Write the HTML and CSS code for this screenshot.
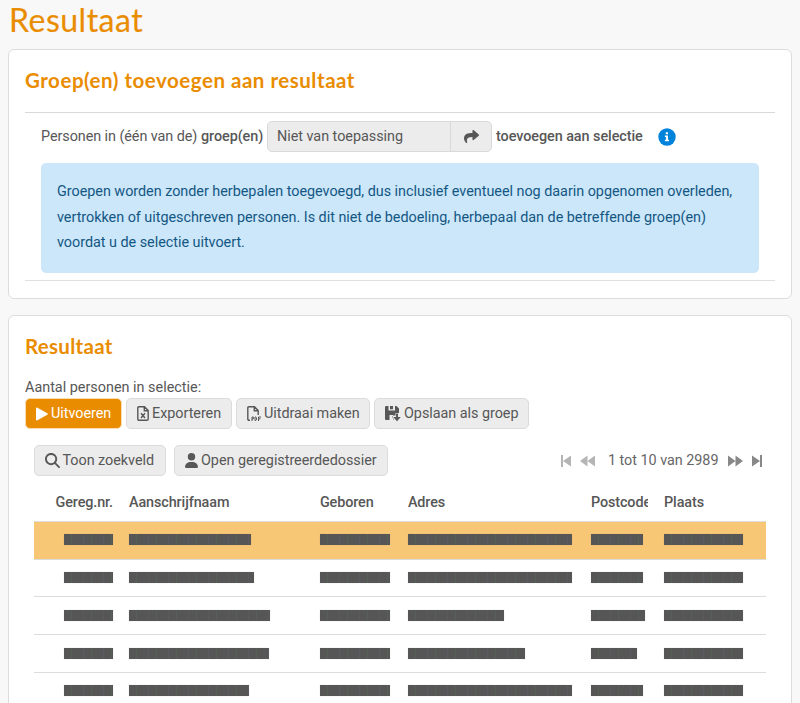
FILE: index.html
```html
<!DOCTYPE html>
<html lang="nl">
<head>
<meta charset="utf-8">
<title>Resultaat</title>
<link rel="stylesheet" href="styles.css">
</head>
<body>
<h1>Resultaat</h1>

<section class="card card-groups">
  <h2 class="h-groups">Groep(en) toevoegen aan resultaat</h2>
  <div class="group-body">
    <div class="group-row">
      <span class="t-intro">Personen in (één van de)</span>
      <b class="t-group">groep(en)</b>
      <div class="picker">
        <span class="picker-value">Niet van toepassing</span>
        <span class="picker-go"><svg width="15" height="15" viewBox="0 0 512 512"><path d="M503.7 189.8 327.7 37.9C312.3 24.5 288 35.3 288 56v80.1C127.4 137.900 0 170.100 0 322.300c0 61.400 39.600 122.300 83.300 154.100 13.700 9.900 33.100-2.500 28.100-18.600C66.100 312.800 132.900 274.300 288 272.100V360c0 20.700 24.300 31.500 39.700 18.200l176-152c11.100-9.600 11.100-26.800 0-36.400z"/></svg></span>
      </div>
      <b class="t-add">toevoegen aan selectie</b>
      <svg class="info" width="18" height="18" viewBox="0 0 18 18"><circle cx="9" cy="9" r="8.700" fill="#0083db"/><path fill="#fff" d="M7.800 4.200h2.200v2H7.800zM6.900 7.500h3.100v4.300h1v1.400H6.900v-1.400h1V8.900h-1z"/></svg>
    </div>
    <p class="notice">Groepen worden zonder herbepalen toegevoegd, dus inclusief eventueel nog daarin opgenomen overleden,<br>vertrokken of uitgeschreven personen. Is dit niet de bedoeling, herbepaal dan de betreffende groep(en)<br>voordat u de selectie uitvoert.</p>
  </div>
</section>

<section class="card card-result">
  <h2 class="h-result">Resultaat</h2>
  <div class="count">Aantal personen in selectie:</div>
  <div class="actions">
    <button class="btn primary b-run"><svg width="12" height="14" viewBox="0 0 12 14"><path d="M0 1.500Q0 0 1.400.7L11.300 6.200q1.100.8 0 1.600L1.400 13.300Q0 14 0 12.500z"/></svg><span>Uitvoeren</span></button>
    <button class="btn b-export"><svg width="12" height="15" viewBox="0 0 12 15"><path fill="none" stroke="currentColor" stroke-width="1.400" d="M2 .8h5.500l3.700 3.700V13q0 1.200-1.200 1.200H2Q.8 14.200.8 13V2Q.8.8 2 .8zM7.300.8v3.900h3.900M4 7.200l4 4.800M8 7.200l-4 4.800"/></svg><span>Exporteren</span></button>
    <button class="btn b-print"><svg width="14" height="16" viewBox="0 0 14 16"><path fill="none" stroke="currentColor" stroke-width="1.400" d="M3 14.200H2Q.8 14.200.8 13V2Q.8.8 2 .8h5.500l3.700 3.700V9M7.300.8v3.900h3.900"/><path fill="none" stroke="currentColor" stroke-width="1" d="M5 15v-4h1.300v2H5M8 11h.8l.7.7v2.100l-.7.7H8zM11.500 15v-4H14M11.500 12.800h2"/></svg><span>Uitdraai maken</span></button>
    <button class="btn b-save"><svg width="16" height="16" viewBox="0 0 16 16"><path fill-rule="evenodd" d="M1 0h2.500v4.500H10V0h1.500L14 2.500V7h-3.500v2.500H8l-.7 1.500L9 13.500H8V9H4.500v5H1q-1 0-1-1V1q0-1 1-1zM5 0h3v3.200H5z"/><path d="M11 7.500h2v3.500h2.800L12 15.300 8.200 11H11z"/></svg><span>Opslaan als groep</span></button>
  </div>
  <div class="toolbar">
    <button class="btn b-search"><svg width="15" height="15" viewBox="0 0 512 512"><path d="M416 208c0 45.900-14.900 88.300-40 122.700L502.600 457.400c12.500 12.500 12.500 32.800 0 45.300s-32.800 12.500-45.300 0L330.700 376c-34.400 25.200-76.800 40-122.700 40C93.100 416 0 322.900 0 208S93.100 0 208 0s208 93.100 208 208zM208 352a144 144 0 1 0 0-288 144 144 0 1 0 0 288z"/></svg><span>Toon zoekveld</span></button>
    <button class="btn b-open"><svg width="13" height="15" viewBox="0 0 448 512"><path d="M224 256A128 128 0 1 0 224 0a128 128 0 1 0 0 256zm-45.700 48C79.800 304 0 383.800 0 482.300 0 498.700 13.300 512 29.700 512h388.600c16.400 0 29.700-13.300 29.700-29.700C448 383.800 368.200 304 269.700 304z"/></svg><span>Open geregistreerdedossier</span></button>
    <div class="pager">
      <svg class="off" width="10" height="12" viewBox="0 0 10 12"><path d="M0 0h2v12H0zM10 .5v11L2 6z"/></svg>
      <svg class="off" width="15" height="12" viewBox="0 0 15 12"><path d="M7.500.5v11L0 6zM15 .5v11L7.500 6z"/></svg>
      <span class="range">1 tot 10 van 2989</span>
      <svg width="15" height="12" viewBox="0 0 15 12"><path d="M0 .5v11L7.500 6zM7.500.5v11L15 6z"/></svg>
      <svg width="10" height="12" viewBox="0 0 10 12"><path d="M8 0h2v12H8zM0 .5v11L8 6z"/></svg>
    </div>
  </div>
  <div class="table" id="table">
    <div class="row head"><b>Gereg.nr.</b><b>Aanschrijfnaam</b><b>Geboren</b><b>Adres</b><b class="clip">Postcode</b><b>Plaats</b></div>
  </div>
</section>
<script src="rows.js"></script>
</body>
</html>
```
FILE: styles.css
```css
* { box-sizing: border-box; }
html, body { height: 703px; overflow: hidden; }
body { margin: 0; padding: 0 8.500px 0 8px; background: #f8f8f8; color: #575757; font: 14.400px/20px Roboto, sans-serif; letter-spacing: -.03px; }
h1, h2 { margin: 0; color: #ea8c00; font-family: Lato, sans-serif; white-space: nowrap; }
h1 { height: 49px; padding-left: 1px; font-size: 32px; line-height: 40px; font-weight: 400; letter-spacing: .5px; -webkit-text-stroke: .15px #ea8c00; }
h2 { font-size: 20.500px; line-height: 28px; font-weight: 700; }
b { font-weight: 500; white-space: nowrap; }
svg { display: block; flex: none; fill: currentColor; }
.card { background: #fff; border: 1px solid #dcdcdc; border-radius: 6px; padding: 0 16px; }
.card-groups { height: 250px; padding-top: 16px; }
.card-result { height: 400px; margin-top: 16px; padding-top: 16px; }
.h-groups { letter-spacing: .52px; }
.group-body { height: 169px; margin-top: 18px; border-top: 1px solid #d9d9d9; border-bottom: 1px solid #e0e0e0; padding: 8px 16px 0; }
.group-row { display: flex; align-items: center; height: 31px; white-space: nowrap; }
.t-intro { width: 160px; letter-spacing: -.07px; }
.t-group { width: 66px; letter-spacing: -.07px; }
.picker { display: flex; width: 225px; height: 31px; border: 1px solid #d9d9d9; border-radius: 5px; background: #ececec; line-height: 29px; }
.picker-value { width: 183px; padding-left: 9px; border-right: 1px solid #d9d9d9; }
.picker-go { flex: 1; display: flex; align-items: center; justify-content: center; }
.t-add { width: 166px; padding-left: 4px; letter-spacing: -.06px; }
.info { margin-top: 1px; }
.notice { margin: 11px 0 0; height: 110px; padding: 16px; border-radius: 5px; background: #cbe7f9; color: #145784; line-height: 25.600px; white-space: nowrap; }
.h-result { height: 46px; letter-spacing: .3px; }
.count { height: 20px; letter-spacing: 0; }
.actions { display: flex; gap: 4px; }
.btn { display: flex; align-items: center; gap: 3px; height: 31px; padding: 0 10px; border: 1px solid #dbdbdb; border-radius: 5px; background: #ececec; color: #575757; font: 14.400px/20px Roboto, sans-serif; letter-spacing: -.04px; white-space: nowrap; }
.primary { background: #ea8c00; border-color: #fbdcae; color: #fff; }
.b-run { width: 97px; }
.b-export { width: 106px; }
.b-print { width: 134px; }
.b-save { width: 155px; }
.b-search { width: 132px; margin-right: 8.500px; }
.b-open { width: 214px; }
.toolbar { display: flex; align-items: center; margin: 16px 8.500px 0; }
.pager { display: flex; align-items: center; margin: 0 4.500px 0 auto; gap: 9px; color: #888; }
.pager .off { color: #b5b5b5; }
.range { margin-left: 4px; color: #666; white-space: nowrap; }
.table { margin: 7px 8.500px 0 9px; }
.row { display: grid; grid-template-columns: 79px 190.500px 88px 183px 73.500px 1fr; height: 37.800px; align-items: center; border-top: 1px solid #dcdcdc; }
.row > :first-child { justify-self: end; }
.row > :nth-child(n+2) { margin-left: 16.400px; }
.row > :nth-child(2), .row > :nth-child(6) { margin-left: 16px; }
.head { padding-top: 2px; border-top-color: transparent; letter-spacing: -.1px; }
.clip { width: 57px; overflow: hidden; }
.selected { background: #f8c775; }
.bar { display: block; height: 11px; margin-bottom: 1px; background: repeating-linear-gradient(90deg, #565656 0 7px, #566056 7px 8px, #565656 8px 19px, #5e5860 19px 20px); box-shadow: 0 0 .6px #777; }
```
FILE: rows.js
```js
const widths = [
  [49, 122, 70, 164, 52, 79],
  [49, 125, 70, 164, 52, 79],
  [49, 141, 70, 96, 54, 79],
  [49, 140, 70, 117, 46, 79],
  [49, 120, 70, 164, 52, 79],
];
const table = document.getElementById("table");
widths.forEach((cells, i) => {
  const row = document.createElement("div");
  row.className = i ? "row" : "row selected";
  cells.forEach((w) => {
    const bar = document.createElement("span");
    bar.className = "bar";
    bar.style.width = w + "px";
    row.append(bar);
  });
  table.append(row);
});
```
